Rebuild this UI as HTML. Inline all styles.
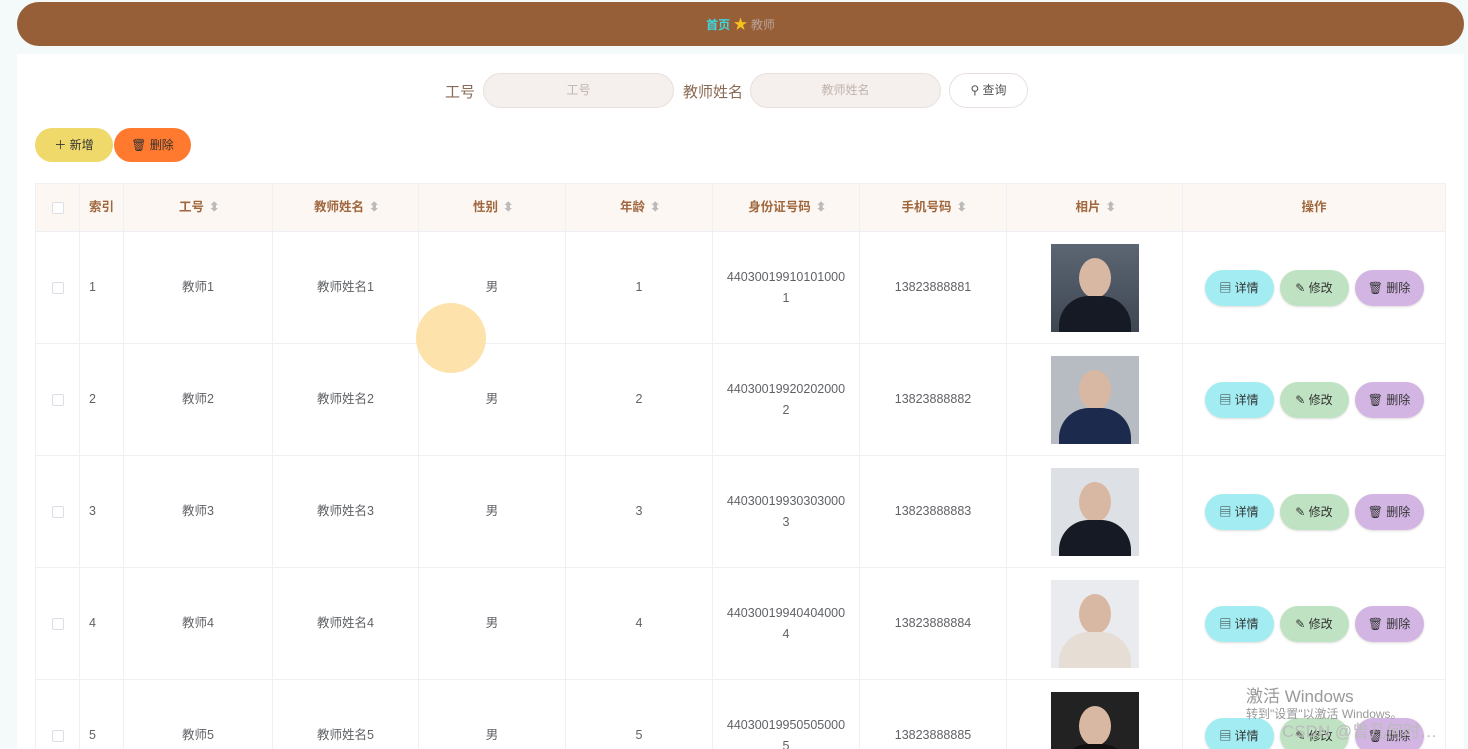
<!DOCTYPE html>
<html><head><meta charset="utf-8"><style>
*{box-sizing:border-box;margin:0;padding:0}
html,body{width:1468px;height:749px;overflow:hidden}
body{background:#f4f9fa;font-family:"Liberation Sans","Noto Sans CJK SC",sans-serif;position:relative;color:#606266}
.hdr{position:absolute;left:17px;top:2px;width:1447px;height:44px;background:#975f38;border-radius:22px;text-align:center;line-height:44px;font-size:12px}
.main{position:absolute;left:17px;top:54px;width:1447px;height:695px;background:#fff}
.lbl{position:absolute;font-size:15px;color:#8b6a55;top:81px}
.inp{position:absolute;top:73px;height:35px;border-radius:18px;background:#f5efed;border:1px solid #e8e0dc;font-size:12px;color:#c0b4ad;text-align:center;line-height:33px}
.btn{position:absolute;height:34px;border-radius:17px;font-size:12px;line-height:34px;text-align:center;color:#333}
.wrap{position:absolute;left:35px;top:183px;width:1411px;height:566px;overflow:hidden}
table{border-collapse:collapse;width:1411px;table-layout:fixed}
td,th{border:1px solid #eef0f4;text-align:center;font-size:12.5px;color:#606266;font-weight:normal;line-height:21px}
th{height:48px;background:#fcf7f3;color:#a0673e;font-weight:bold}
td{height:112px}
.s{display:inline-block;width:8px;vertical-align:middle;margin-left:5px}
.cb{display:inline-block;width:12px;height:12px;border:1px solid #dcdfe6;border-radius:2px;background:#fff;vertical-align:middle}
.ph{width:88px;height:88px;margin:0 auto;background:linear-gradient(#5c6673,#3e4652);position:relative;overflow:hidden}
.ph i{position:absolute;left:28px;top:14px;width:32px;height:40px;border-radius:50%;background:#d9b8a3}
.ph b{position:absolute;left:8px;top:52px;width:72px;height:50px;border-radius:30px 30px 0 0;background:#161a24}
.op{display:inline-block;width:69px;height:36px;line-height:36px;border-radius:18px;margin:0 3px;font-size:12px;color:#333;box-shadow:0 1px 2px rgba(0,0,0,.15)}
</style></head><body>
<div class="hdr"><span style="color:#3fd6e0;font-weight:bold">首页</span> <span style="color:#f9c21b;font-size:14px">★</span> <span style="color:#b9a49a">教师</span></div>
<div class="main"></div>
<div class="lbl" style="left:445px">工号</div>
<div class="inp" style="left:483px;width:191px">工号</div>
<div class="lbl" style="left:683px">教师姓名</div>
<div class="inp" style="left:750px;width:191px">教师姓名</div>
<div class="inp" style="left:949px;width:79px;background:#fff;color:#555">&#9906; 查询</div>
<div class="btn" style="left:35px;top:128px;width:78px;background:#f0d96b">＋ 新增</div>
<div class="btn" style="left:114px;top:128px;width:77px;background:#ff7a2f">🗑 删除</div>
<div class="wrap"><table>
<colgroup><col style="width:44px"><col style="width:44px"><col style="width:149px"><col style="width:146px"><col style="width:147px"><col style="width:147px"><col style="width:147px"><col style="width:147px"><col style="width:176px"><col></colgroup>
<tr><th><span class="cb"></span></th><th style="text-align:left;padding-left:9px">索引</th><th>工号<span class="s" style="color:#bbb">⬍</span></th><th>教师姓名<span class="s" style="color:#bbb">⬍</span></th><th>性别<span class="s" style="color:#bbb">⬍</span></th><th>年龄<span class="s" style="color:#bbb">⬍</span></th><th>身份证号码<span class="s" style="color:#bbb">⬍</span></th><th>手机号码<span class="s" style="color:#bbb">⬍</span></th><th>相片<span class="s" style="color:#bbb">⬍</span></th><th>操作</th></tr>
<tr><td><span class="cb"></span></td><td style="text-align:left;padding-left:9px">1</td><td>教师1</td><td>教师姓名1</td><td>男</td><td>1</td><td>44030019910101000<br>1</td><td>13823888881</td><td><div class="ph"><i></i><b></b></div></td><td><span class="op" style="background:#a3ecf2">▤ 详情</span><span class="op" style="background:#bfe3c2">✎ 修改</span><span class="op" style="background:#d3b5e3">🗑 删除</span></td></tr>
<tr><td><span class="cb"></span></td><td style="text-align:left;padding-left:9px">2</td><td>教师2</td><td>教师姓名2</td><td>男</td><td>2</td><td>44030019920202000<br>2</td><td>13823888882</td><td><div class="ph" style="background:#b7bcc2"><i></i><b style="background:#1b2a4d"></b></div></td><td><span class="op" style="background:#a3ecf2">▤ 详情</span><span class="op" style="background:#bfe3c2">✎ 修改</span><span class="op" style="background:#d3b5e3">🗑 删除</span></td></tr>
<tr><td><span class="cb"></span></td><td style="text-align:left;padding-left:9px">3</td><td>教师3</td><td>教师姓名3</td><td>男</td><td>3</td><td>44030019930303000<br>3</td><td>13823888883</td><td><div class="ph" style="background:#dde0e4"><i></i><b></b></div></td><td><span class="op" style="background:#a3ecf2">▤ 详情</span><span class="op" style="background:#bfe3c2">✎ 修改</span><span class="op" style="background:#d3b5e3">🗑 删除</span></td></tr>
<tr><td><span class="cb"></span></td><td style="text-align:left;padding-left:9px">4</td><td>教师4</td><td>教师姓名4</td><td>男</td><td>4</td><td>44030019940404000<br>4</td><td>13823888884</td><td><div class="ph" style="background:#e9ebee"><i></i><b style="background:#e6ddd5"></b></div></td><td><span class="op" style="background:#a3ecf2">▤ 详情</span><span class="op" style="background:#bfe3c2">✎ 修改</span><span class="op" style="background:#d3b5e3">🗑 删除</span></td></tr>
<tr><td><span class="cb"></span></td><td style="text-align:left;padding-left:9px">5</td><td>教师5</td><td>教师姓名5</td><td>男</td><td>5</td><td>44030019950505000<br>5</td><td>13823888885</td><td><div class="ph" style="background:#222"><i></i><b style="background:#111"></b></div></td><td><span class="op" style="background:#a3ecf2">▤ 详情</span><span class="op" style="background:#bfe3c2">✎ 修改</span><span class="op" style="background:#d3b5e3">🗑 删除</span></td></tr>
</table></div>
<div style="position:absolute;left:416px;top:303px;width:70px;height:70px;border-radius:50%;background:rgba(253,220,150,.8)"></div>
<div style="position:absolute;left:1246px;top:682px;font-size:17px;color:#999">激活 Windows</div>
<div style="position:absolute;left:1246px;top:705px;font-size:12px;color:#999">转到"设置"以激活 Windows。</div>
<div style="position:absolute;left:1282px;top:717px;font-size:17px;color:#bbb">CSDN @曾几何时…</div>
</body></html>
